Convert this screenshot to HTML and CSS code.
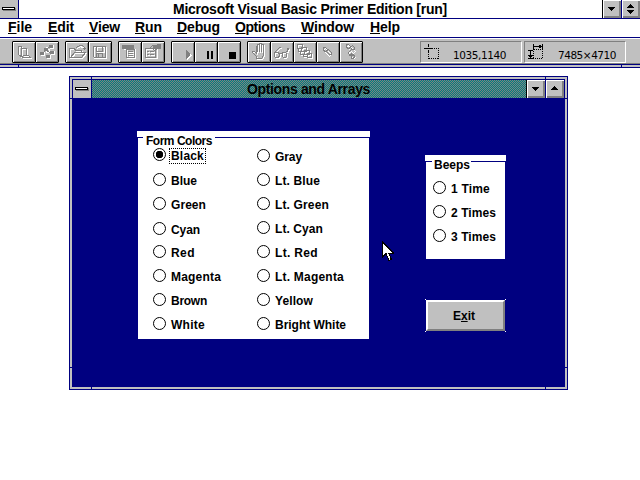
FILE: index.html
```html
<!DOCTYPE html>
<html lang="en">
<head>
<meta charset="utf-8">
<title>Microsoft Visual Basic Primer Edition [run]</title>
<link rel="stylesheet" href="styles.css">
</head>
<body>
<header class="titlebar">
  <div class="sysbox"><i class="dash"></i></div>
  <h1 class="caption"><span data-w="274">Microsoft Visual Basic Primer Edition [run]</span></h1>
  <div class="winbtn"><svg viewBox="0 0 18 18"><path d="M5 7h7v1h-1v1h-1v1h-1v1h-1v-1h-1v-1h-1v-1h-1z"/></svg></div>
  <div class="winbtn last"><svg viewBox="0 0 18 18"><path d="M8 4h1v1h1v1h1v1h1v1h-7v-1h1v-1h1v-1h1zM5 10h7v1h-1v1h-1v1h-1v1h-1v-1h-1v-1h-1v-1h-1z"/></svg></div>
</header>
<nav class="menu">
  <span data-w="24"><u>F</u>ile</span><span data-w="26"><u>E</u>dit</span><span data-w="31"><u>V</u>iew</span><span data-w="27"><u>R</u>un</span><span data-w="43"><u>D</u>ebug</span><span data-w="50"><u>O</u>ptions</span><span data-w="53"><u>W</u>indow</span><span data-w="30"><u>H</u>elp</span>
</nav>
<div class="toolbar">
  <div class="group">
    <div class="tool"><svg viewBox="12 40 24 22"><g class="hi" transform="translate(1 1)"><path id="i1" d="M17.500 45.500h4v2h5v7h2l2 2h-8l-4-3v-8M21.500 47.500v7l2 2M22.500 54.500h4"/></g><use href="#i1" class="lo"/></svg></div>
    <div class="tool"><svg viewBox="35 40 24 22"><path class="hi" d="M50.500 44.500h3v3h-3zM46.500 48.500h3v3h-3zM51.500 50.500h3v3h-3zM41.500 51.500h3v3h-3zM47.500 54.500h3v3h-3zM45.500 46.500h3"/><path class="lo heavy" d="M49.500 44.500h3v2h-3zM44.500 47.500h3v2h-3zM50.500 50.500h3v2h-3zM40.500 51.500h3v2h-3zM46.500 54.500h3v2h-3zM48.500 46.500l-5 5M44.500 47.500l6 5"/></svg></div>
  </div>
  <div class="group">
    <div class="tool"><svg viewBox="65 40 24 22"><path class="hi" d="M70.500 57.500v-9h5l1 2h6v2M71.500 57.500l4-5h11l-4 5zM77.500 47.500l3-2 4 2"/><path class="lo" d="M69.500 56.500v-9h5l1 2h6v2M70.500 56.500l4-5h11l-4 5zM76.500 46.500l3-2h3l2 2v2M82.500 47.500h3"/></svg></div>
    <div class="tool"><svg viewBox="88 40 24 22"><path class="hi" d="M94.500 46.500h12v11h-12zM97.500 46.500v5h7v-5"/><path class="lo" d="M93.500 45.500h12v11h-11l-1-1zM96.500 45.500v5h6v-5M96.500 56.500v-4h6v4M98.500 53v3"/></svg></div>
  </div>
  <div class="group">
    <div class="tool"><svg viewBox="118 40 24 22"><path class="hi" d="M123.500 48.500h12M127.500 48.500h8v9h-8zM129 51.500h5M129 53.500h5M129 55.500h5"/><path class="lo thick" d="M122 46h12"/><path class="lo" d="M126.500 48.500h8v8h-8zM128 50.500h5M128 52.500h5M128 54.500h5"/></svg></div>
    <div class="tool"><svg viewBox="141 40 24 22"><path class="hi" d="M146.500 48.500h11v9h-11zM148 51.500h2M151 51.500h5M148 54.500h2M151 54.500h5"/><path class="lo" d="M145.500 47.500h10v9h-10zM147 50.500h2M150 50.500h4M147 53.500h2M150 53.500h4M149.500 47.500l3-3 2 1h3M157 43.500h3v4h-3l-2 2-3-2"/><path fill="#808080" d="M154 44h6v3h-4l-3 2z"/></svg></div>
  </div>
  <div class="group">
    <div class="tool"><svg viewBox="171 40 24 22"><path fill="#fff" d="M187 50l5 5-5 4z"/><path fill="#808080" d="M186 49h1v1h1v1h1v1h1v3h-1v1h-1v1h-1v1h-1z"/></svg></div>
    <div class="tool"><svg viewBox="194 40 24 22"><path d="M207 50h2v8h-2zM211 50h2v8h-2z"/></svg></div>
    <div class="tool"><svg viewBox="217 40 24 22"><path d="M229 51h7v7h-7z"/></svg></div>
  </div>
  <div class="group">
    <div class="tool"><svg viewBox="247 40 24 22"><g transform="translate(1 1)" class="hi"><path id="i2" d="M256.500 57.500v-2l-4-4v-1h2l2 2v-7h1v5v-7h2v7v-8h2v8v-7h2v11l-2 3z"/></g><use href="#i2" class="lo"/></svg></div>
    <div class="tool"><svg viewBox="270 40 24 22"><g transform="translate(1 1)" class="hi"><path id="i3" d="M274.500 51.500h3l2 1v3l-2 1h-2l-1-1zM274.500 51.500l5-5h1M280 52.500h2M282.500 51.500h3l1 1v3l-1 1h-2l-1-1zM286.500 51.500l2-4h-2"/></g><use href="#i3" class="lo"/></svg></div>
    <div class="tool"><svg viewBox="293 40 24 22"><g transform="translate(1 1)" class="hi"><path id="i4" d="M297.500 43.500h5v4h-5zM301.500 46.500h5v4h-5zM304.500 49.500h5v4h-5zM307.500 52.500h4v4h-4zM298.500 47.500v3h3M300.500 50.500v3h4M303.500 53.500v2h4"/></g><use href="#i4" class="lo"/></svg></div>
    <div class="tool"><svg viewBox="316 40 24 22"><path class="hi" d="M325.500 47.500l6 6-2 2-6-6z"/><path class="lo" d="M323.500 46.500h2l2 2-1 2h-2l-1-2zM326.500 50.500l2-2 3 3v2h-2z"/></svg></div>
    <div class="tool"><svg viewBox="339 40 24 22"><path class="hi" d="M348.500 44.500l7 6-2 2-6-6zM350.500 51.500l5 5-2 1-5-5z"/><path class="lo" d="M346.500 43.500h2l2 2-1 2h-2l-1-2zM350.500 46.500l2-2 2 2v2h-2zM351.500 48.500l-3 3 1 3 2-1v-2M351.500 54.500l2-1 1 2-1 2h-2z"/></svg></div>
  </div>
  <div class="status">
    <svg viewBox="0 0 24 22"><path d="M4 7h3v1h-3zM9 7h3v1h-3zM8 3h1v3h-1zM8 9h1v2h-1zM7 7h3v1h-3z"/><path class="dots" d="M10 7.500h9M18.500 9v9M9 17.500h9M8.500 9v9"/></svg>
    <span data-w="53">1035,1140</span>
  </div>
  <div class="status second">
    <svg viewBox="0 0 24 22"><path d="M9 3h1v5h-1zM18 3h1v5h-1zM10 5h8v1h-8zM16 4h1v3h-1zM15 4h1v3h-1zM4 9h5v1h-5zM6 10h1v7h-1zM4 14h5v1h-5zM5 15h3v1h-3zM4 17h5v1h-5z"/><path class="dots" d="M10 8.500h8M18.500 8v10M9 17.500h9M9.500 8v10"/></svg>
    <span data-w="58">7485×4710</span>
  </div>
</div>
<div class="frame-edge"><i></i><i></i></div>
<main class="desktop">
  <section class="window">
    <i class="tick top l"></i><i class="tick top r"></i><i class="tick bottom l"></i><i class="tick bottom r"></i>
    <i class="tick side w hi-y"></i><i class="tick side e hi-y"></i><i class="tick side w lo-y"></i><i class="tick side e lo-y"></i>
    <div class="inner">
      <div class="titlebar form-title">
        <div class="sysbox"><i class="dash"></i></div>
        <h2 class="caption">
          <svg class="dither"><defs><pattern id="chk" width="2" height="2" patternUnits="userSpaceOnUse"><path fill="#008080" d="M0 0h2v2h-2z"/><path fill="#808080" d="M0 0h1v1h-1zM1 1h1v1h-1z"/></pattern></defs><rect width="100%" height="100%" fill="url(#chk)"/></svg>
          <span data-w="123">Options and Arrays</span>
        </h2>
        <div class="winbtn"><svg viewBox="0 0 18 18"><path d="M5 7h7v1h-1v1h-1v1h-1v1h-1v-1h-1v-1h-1v-1h-1z"/></svg></div>
        <div class="winbtn last"><svg viewBox="0 0 18 18"><path d="M8 6h1v1h1v1h1v1h1v1h-7v-1h1v-1h1v-1h1z"/></svg></div>
      </div>
      <div class="form">
        <div class="frame colors">
          <div class="legend"><span data-w="66">Form Colors</span></div>
          <div class="options two">
            <label class="opt up"><i class="radio on"></i><b class="focus" data-w="33">Black</b></label>
            <label class="opt"><i class="radio"></i><b data-w="27">Gray</b></label>
            <label class="opt"><i class="radio"></i><b data-w="26">Blue</b></label>
            <label class="opt"><i class="radio"></i><b data-w="45">Lt. Blue</b></label>
            <label class="opt"><i class="radio"></i><b data-w="35">Green</b></label>
            <label class="opt"><i class="radio"></i><b data-w="54">Lt. Green</b></label>
            <label class="opt down"><i class="radio"></i><b data-w="29">Cyan</b></label>
            <label class="opt"><i class="radio"></i><b data-w="48">Lt. Cyan</b></label>
            <label class="opt"><i class="radio"></i><b data-w="24">Red</b></label>
            <label class="opt"><i class="radio"></i><b data-w="43">Lt. Red</b></label>
            <label class="opt"><i class="radio"></i><b data-w="50">Magenta</b></label>
            <label class="opt"><i class="radio"></i><b data-w="69">Lt. Magenta</b></label>
            <label class="opt"><i class="radio"></i><b data-w="36">Brown</b></label>
            <label class="opt"><i class="radio"></i><b data-w="38">Yellow</b></label>
            <label class="opt"><i class="radio"></i><b data-w="34">White</b></label>
            <label class="opt"><i class="radio"></i><b data-w="71">Bright White</b></label>
          </div>
        </div>
        <div class="right">
          <div class="frame beeps">
            <div class="legend"><span data-w="36">Beeps</span></div>
            <div class="options">
              <label class="opt"><i class="radio"></i><b data-w="39">1 Time</b></label>
              <label class="opt"><i class="radio"></i><b data-w="45">2 Times</b></label>
              <label class="opt"><i class="radio"></i><b data-w="45">3 Times</b></label>
            </div>
          </div>
          <div class="exit"><i></i><i></i><i></i><i></i><b data-w="22">E<u>x</u>it</b></div>
        </div>
      </div>
    </div>
  </section>
</main>
<svg class="cursor" viewBox="0 0 12 20"><path d="M.500.500v15l3.500-3.500 3 7 2.500-1-3-6.500h5z" fill="#fff" stroke="#000"/></svg>
<script src="fit.js"></script>
</body>
</html>
```
FILE: styles.css
```css
* { box-sizing: border-box; }
body {
  margin: 0; width: 640px; height: 480px; overflow: hidden; background: #fff; color: #000;
  font: bold 14px/18px "Liberation Sans", Arial, sans-serif;
}
svg { display: block; shape-rendering: crispEdges; }
[data-w] { display: inline-block; white-space: nowrap; }
u { text-decoration: underline 1px; text-underline-offset: 1px; text-decoration-skip-ink: none; }

.titlebar { display: flex; height: 19px; border-bottom: 1px solid #000080; }
.sysbox { width: 19px; height: 18px; background: #c0c0c0; border-right: 1px solid #000080; padding: 7px 0 0 2px; }
.dash { display: block; width: 13px; height: 3px; background: #fff; border: 1px solid #000; box-shadow: 1px 1px #808080; }
.caption { position: relative; flex: 1; margin: 0; font: inherit; height: 18px; }
header .caption { padding-left: 154px; }
.winbtn {
  width: 19px; height: 18px; background: #c0c0c0; border-left: 1px solid #000;
  box-shadow: inset 1px 1px #fff, inset -1px -1px #808080, inset -2px -2px #808080;
}
.winbtn.last { border-left-color: #000080; }
.winbtn svg { width: 18px; height: 18px; }

.menu { display: grid; grid-template-columns: 40px 41px 46px 42px 58px 66px 69px 1fr; height: 19px; padding-left: 8px; line-height: 16px; border-bottom: 1px solid #000080; }

.toolbar { display: flex; height: 26px; padding: 2px 0 0 12px; background: #c0c0c0; border-top: 1px solid #fff; border-bottom: 1px solid #808080; }
.group { display: flex; margin-right: 6px; height: 22px; }
.tool {
  width: 24px; height: 22px; margin-right: -1px; border: 1px solid #000; border-radius: 1px;
  box-shadow: inset 1px 1px #fff, inset -1px -1px #808080;
}
.group .tool:last-child { margin-right: 0; }
.tool svg { width: 24px; height: 22px; margin: -1px; }
.hi { fill: none; stroke: #fff; }
.lo { fill: none; stroke: #808080; }
.heavy { fill: #808080; }
.thick { stroke-width: 4; }
.status {
  display: flex; width: 102px; height: 22px; margin-left: 51px; border: 1px solid; border-color: #808080 #fff #fff #808080;
  font: 10.500px/14px "DejaVu Sans", sans-serif;
}
.status.second { margin-left: 2px; }
.status svg { width: 24px; height: 22px; margin: -1px 9px 0 -1px; }
.status span { padding-top: 6px; }
.status.second svg { margin-right: 10px; }
.dots { fill: none; stroke: #000; stroke-dasharray: 1 1; }
.frame-edge { display: flex; justify-content: space-between; height: 4px; padding: 0 18px; background: #c0c0c0; border: solid #000080; border-width: 1px 0; }
.frame-edge i { width: 1px; background: #000080; }

.desktop { padding: 8px 0 0 69px; }
.window { position: relative; width: 499px; height: 314px; padding: 2px; background: #c0c0c0; border: 1px solid #000080; }
.inner { height: 308px; border: 1px solid #000080; background: #000080; }
.tick { position: absolute; background: #000080; width: 1px; height: 2px; }
.tick.top { top: 0; }
.tick.bottom { bottom: 0; }
.tick.l { left: 21px; }
.tick.r { left: 475px; }
.tick.side { width: 2px; height: 1px; }
.tick.w { left: 0; }
.tick.e { right: 0; }
.tick.hi-y { top: 21px; }
.tick.lo-y { top: 290px; }
.form-title .caption { padding-left: 155px; }
.dither { position: absolute; left: 0; top: 0; width: 100%; height: 100%; }
.caption span { position: relative; }
.form { display: flex; padding: 32px 0 0 64px; font-size: 12px; line-height: 13px; }
.frame { position: relative; border-top: 6px solid #fff; }
.frame::after { content: ""; position: absolute; inset: 0 1px; background: #fff; border-top: 1px solid #000080; }
.legend { position: absolute; z-index: 1; left: 6px; top: -2px; padding-left: 3px; background: #fff; }
.colors { width: 233px; height: 208px; }
.colors .legend { width: 72px; line-height: 12px; }
.options { position: relative; z-index: 1; display: grid; grid-auto-rows: 24px; padding: 20px 0 0 8px; }
.options.two { grid-template-columns: 104px 1fr; padding: 12px 0 0 16px; }
.opt { display: flex; height: 15px; }
.opt b { margin: 2px 0 0 5px; height: 13px; }
.opt.up { margin-top: -1px; }
.opt.down { margin-top: 1px; }
.radio { width: 13px; height: 13px; border: 1px solid #000; border-radius: 50%; background: #fff; }
.radio.on { background: radial-gradient(circle, #000 3.500px, #fff 4px); }
.opt b.focus { position: relative; }
.focus::after { content: ""; position: absolute; inset: -2px -2px -1px -2px; border: 1px dotted #000; }
.right { margin: 24px 0 0 55px; }
.beeps { width: 81px; height: 104px; }
.beeps .legend { left: 7px; width: 39px; padding-left: 2px; }
.exit {
  position: relative; width: 79px; height: 31px; margin: 41px 0 0 1px; padding: 8px 0 0 25px; background: #c0c0c0;
  border: 2px solid; border-color: #fff #808080 #808080 #fff;
}
.exit > i { position: absolute; width: 1px; height: 1px; background: #fff; }
.exit > i:nth-of-type(1) { left: -3px; top: -3px; }
.exit > i:nth-of-type(2) { right: -3px; top: -3px; }
.exit > i:nth-of-type(3) { left: -3px; bottom: -3px; }
.exit > i:nth-of-type(4) { right: -3px; bottom: -3px; }
.cursor { position: absolute; left: 382px; top: 241px; width: 12px; height: 21px; }
```
FILE: fit.js
```js
// Spread each label's letters to the width of the bitmap font's metrics.
document.querySelectorAll('[data-w]').forEach(function (el) {
  var range = document.createRange();
  range.selectNodeContents(el);
  var width = range.getBoundingClientRect().width;
  el.style.letterSpacing = ((+el.dataset.w - width) / el.textContent.length) + 'px';
});
```
